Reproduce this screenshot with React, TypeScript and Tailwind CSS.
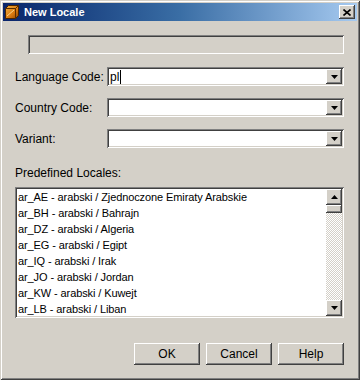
import React from 'react';

const raised =
  'shadow-[inset_-1px_-1px_#404040,inset_1px_1px_#ffffff,inset_-2px_-2px_#808080,inset_2px_2px_#d4d0c8]';
const sunken =
  'shadow-[inset_1px_1px_#808080,inset_-1px_-1px_#ffffff,inset_2px_2px_#404040,inset_-2px_-2px_#d4d0c8]';

const locales = [
  'ar_AE - arabski / Zjednoczone Emiraty Arabskie',
  'ar_BH - arabski / Bahrajn',
  'ar_DZ - arabski / Algeria',
  'ar_EG - arabski / Egipt',
  'ar_IQ - arabski / Irak',
  'ar_JO - arabski / Jordan',
  'ar_KW - arabski / Kuwejt',
  'ar_LB - arabski / Liban',
];

const Arrow = ({ up = false }: { up?: boolean }) => (
  <svg width="7" height="4" viewBox="0 0 7 4" className={up ? 'rotate-180' : ''}>
    <path d="M0 0h7L3.5 4z" fill="#000" />
  </svg>
);

const WinButton = ({ children, className = '' }: { children: React.ReactNode; className?: string }) => (
  <div className={`flex items-center justify-center bg-[#d4d0c8] ${raised} ${className}`}>{children}</div>
);

const Combo = ({ value }: { value?: string }) => (
  <div className={`flex h-[19px] w-[237px] items-center bg-white p-[2px] ${sunken}`}>
    <div className="flex flex-1 items-center pl-[1px] text-black">
      {value}
      {value && <span className="ml-[1px] h-[14px] w-px bg-black" />}
    </div>
    <WinButton className="h-[15px] w-[16px]">
      <Arrow />
    </WinButton>
  </div>
);

export default function App() {
  return (
    <div
      className="flex h-[380px] w-[360px] flex-col bg-[#d4d0c8] p-[3px] text-[12px] text-black shadow-[inset_1px_1px_#d4d0c8,inset_-1px_-1px_#404040,inset_2px_2px_#ffffff,inset_-2px_-2px_#808080]"
      style={{ fontFamily: '"Liberation Sans", Arial, sans-serif' }}
    >
      {/* title bar */}
      <div className="flex h-[18px] items-center bg-gradient-to-r from-[#0a246a] via-[#3a6ea5] to-[#a6caf0] pl-[1px] pr-[2px]">
        <svg width="16" height="16" viewBox="0 0 16 16">
          <defs>
            <linearGradient id="cube" x1="0" y1="0" x2="1" y2="1">
              <stop offset="0" stopColor="#f7b341" />
              <stop offset="0.6" stopColor="#d9780f" />
              <stop offset="1" stopColor="#8a4300" />
            </linearGradient>
          </defs>
          <path d="M1.5 4.5L4.5 1.5H14.5V11.5L11.5 14.5H1.5Z" fill="url(#cube)" stroke="#4a2500" />
          <path d="M1.5 4.5H11.5V14.5M11.5 4.5L14.5 1.5" stroke="#5a2d00" fill="none" />
          <path d="M3 12L10 6" stroke="#fbd58a" strokeWidth="1" />
        </svg>
        <span className="ml-[4px] text-[11px] font-bold text-white">New Locale</span>
        <WinButton className="ml-auto h-[14px] w-[16px]">
          <svg width="8" height="7" viewBox="0 0 8 7">
            <path d="M0.5 0.5l7 6M7.5 0.5l-7 6" stroke="#000" strokeWidth="1.6" />
          </svg>
        </WinButton>
      </div>

      <div className="flex flex-1 flex-col pl-[12px] pr-[13px]">
        {/* disabled field */}
        <div className={`ml-[13px] mt-[14px] h-[19px] bg-[#d4d0c8] ${sunken}`} />

        <div className="mt-[13px] flex flex-col gap-[12px]">
          <div className="flex items-center justify-between">
            <span>Language Code:</span>
            <Combo value="pl" />
          </div>
          <div className="flex items-center justify-between">
            <span>Country Code:</span>
            <Combo />
          </div>
          <div className="flex items-center justify-between">
            <span>Variant:</span>
            <Combo />
          </div>
        </div>

        <div className="mt-[16px]">Predefined Locales:</div>

        {/* list box */}
        <div className={`mt-[5px] flex h-[131px] bg-white p-[2px] ${sunken}`}>
          <div className="flex flex-1 flex-col pl-[1px] text-[11px] tracking-[-0.1px]">
            {locales.map((l) => (
              <div key={l} className="flex h-[16px] items-center whitespace-nowrap">
                {l}
              </div>
            ))}
          </div>
          <div className="flex w-[16px] flex-col">
            <WinButton className="h-[16px]">
              <Arrow up />
            </WinButton>
            <div className="flex-1 bg-[repeating-conic-gradient(#ffffff_0_25%,#d4d0c8_0_50%)] bg-[length:2px_2px]">
              <div className={`h-[8px] bg-[#d4d0c8] ${raised}`} />
            </div>
            <WinButton className="h-[16px]">
              <Arrow />
            </WinButton>
          </div>
        </div>

        {/* buttons */}
        <div className="mt-[25px] flex justify-end gap-[6px]">
          <WinButton className="h-[22px] w-[66px]">OK</WinButton>
          <WinButton className="h-[22px] w-[66px]">Cancel</WinButton>
          <WinButton className="h-[22px] w-[66px]">Help</WinButton>
        </div>
      </div>
    </div>
  );
}
